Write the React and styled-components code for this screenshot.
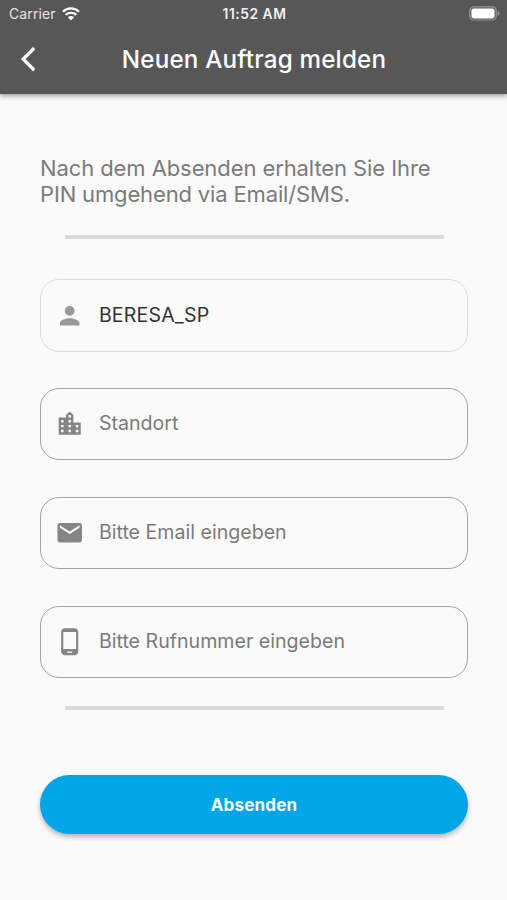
import React from 'react';
import styled, { createGlobalStyle } from 'styled-components';

const GlobalStyle = createGlobalStyle`
  * { box-sizing: border-box; }
  body { margin: 0; background: #fafafa; font-family: Inter, "Liberation Sans", sans-serif; }
`;

const Screen = styled.div`
  width: 507px;
  height: 900px;
  display: flex;
  flex-direction: column;
  background: #fafafa;
  overflow: hidden;
`;

const Header = styled.header`
  height: 94px;
  flex: none;
  background: #575757;
  color: #fff;
  box-shadow: 0 2px 5px rgba(0, 0, 0, 0.38);
`;

const StatusBar = styled.div`
  height: 27px;
  padding: 0 7px 0 9px;
  display: grid;
  grid-template-columns: 1fr auto 1fr;
  align-items: center;
`;

const Carrier = styled.div`
  display: flex;
  align-items: center;
  gap: 6px;
  font-size: 14px;
  line-height: 27px;
  letter-spacing: 0.1px;
  color: #e4e4e4;
`;

const Clock = styled.div`
  height: 27px;
  font-size: 13.8px;
  line-height: 29px;
  font-weight: 600;
  letter-spacing: 0.55px;
  color: #f0f0f0;
`;

const BatterySlot = styled.div`
  display: flex;
  justify-content: flex-end;
`;

const TitleBar = styled.div`
  height: 66px;
  display: grid;
  grid-template-columns: 60px 1fr 60px;
  align-items: center;
`;

const BackButton = styled.button`
  width: 60px;
  height: 60px;
  padding: 0 0 1px 20.5px;
  border: 0;
  background: none;
  color: #fff;
  display: flex;
  align-items: center;
`;

const Title = styled.h1`
  margin: 0;
  padding-left: 1px;
  text-align: center;
  white-space: nowrap;
  font-size: 24.2px;
  line-height: 30px;
  font-weight: 500;
  letter-spacing: 0.2px;
`;

const Form = styled.form`
  padding: 61px 39px 0 40px;
  display: flex;
  flex-direction: column;
`;

const Intro = styled.p`
  margin: 0;
  height: 52px;
  font-size: 22px;
  line-height: 26px;
  color: #7b7b7b;
  white-space: nowrap;
`;

const IntroLine = styled.span`
  display: block;
  letter-spacing: ${(p) => p.$spacing};
`;

const Divider = styled.hr`
  width: 379px;
  height: 4px;
  margin: ${(p) => p.$margin};
  border: 0;
  background: #dadada;
`;

const Fields = styled.div`
  display: grid;
  grid-auto-rows: 72px;
  row-gap: 37px;
`;

const Field = styled.label`
  display: flex;
  align-items: center;
  margin-bottom: ${(p) => (p.$filled ? '-1px' : '0')};
  padding-left: 14px;
  gap: 14.5px;
  border: ${(p) => (p.$filled ? '1px solid #dcdcdc' : '1px solid #a4a4a4')};
  border-radius: 19px;
  color: ${(p) => (p.$filled ? '#999' : '#858585')};
`;

const FieldText = styled.span`
  position: relative;
  top: -1px;
  white-space: nowrap;
  font-size: 19.6px;
  line-height: 26px;
  letter-spacing: ${(p) => p.$spacing};
  color: ${(p) => (p.$filled ? '#333' : '#7a7a7a')};
`;

const Submit = styled.button`
  height: 59px;
  padding: 1px 0 0;
  border: 0;
  border-radius: 30px;
  background: #02a5e5;
  color: #fff;
  font-family: inherit;
  font-size: 17px;
  font-weight: 700;
  letter-spacing: 0.2px;
  box-shadow: 0 3px 5px rgba(0, 0, 0, 0.28);
`;

const Icon = styled.svg`
  display: block;
  flex: none;
  fill: currentColor;
`;

const PATHS = {
  person: 'M12 12c2.21 0 4-1.79 4-4s-1.79-4-4-4-4 1.79-4 4 1.79 4 4 4zm0 2c-2.67 0-8 1.34-8 4v2h16v-2c0-2.66-5.33-4-8-4z',
  city: 'M15 11V5l-3-3-3 3v2H3v14h18V11h-6zm-8 8H5v-2h2v2zm0-4H5v-2h2v2zm0-4H5V9h2v2zm6 8h-2v-2h2v2zm0-4h-2v-2h2v2zm0-4h-2V9h2v2zm0-4h-2V5h2v2zm6 12h-2v-2h2v2zm0-4h-2v-2h2v2z',
  mail: 'M20 4H4c-1.1 0-1.99.9-1.99 2L2 18c0 1.1.9 2 2 2h16c1.1 0 2-.9 2-2V6c0-1.1-.9-2-2-2zm0 4l-8 5-8-5V6l8 5 8-5v2z',
  phone: 'M16 1H8C6.34 1 5 2.34 5 4v16c0 1.66 1.34 3 3 3h8c1.66 0 3-1.34 3-3V4c0-1.66-1.34-3-3-3zm-2 20h-4v-1h4v1zm3.25-3H6.75V4h10.5v14z',
};

const FIELDS = [
  { icon: 'person', text: 'BERESA_SP', filled: true, spacing: '0.15px' },
  { icon: 'city', text: 'Standort', spacing: '0px' },
  { icon: 'mail', text: 'Bitte Email eingeben', spacing: '0px' },
  { icon: 'phone', text: 'Bitte Rufnummer eingeben', spacing: '0px' },
];

function Wifi() {
  return (
    <Icon width="18" height="14" viewBox="0 0 18 14">
      <path d="M9 13.5 5.9 10.3a4.4 4.4 0 0 1 6.2 0z" fill="#fff" />
      <path d="M3.7 7.9a7.6 7.6 0 0 1 10.6 0M1 4.7a11.4 11.4 0 0 1 16 0" fill="none" stroke="#fff" strokeWidth="2.2" />
    </Icon>
  );
}

function Battery() {
  return (
    <Icon width="31" height="15" viewBox="0 0 31 15">
      <rect x="0.8" y="0.8" width="26.4" height="13.2" rx="4" fill="none" stroke="#969696" strokeWidth="1.2" />
      <rect x="2.4" y="2.4" width="23.2" height="10" rx="2.3" fill="#fff" />
      <path d="M28.6 5.2c1.2.4 1.9 1.2 1.9 2.2s-.7 1.8-1.9 2.2z" fill="#969696" />
    </Icon>
  );
}

export default function App() {
  return (
    <>
      <GlobalStyle />
      <Screen>
        <Header>
          <StatusBar>
            <Carrier>Carrier <Wifi /></Carrier>
            <Clock>11:52 AM</Clock>
            <BatterySlot><Battery /></BatterySlot>
          </StatusBar>
          <TitleBar>
            <BackButton aria-label="Zurück">
              <Icon width="14.3" height="24.2" viewBox="0 2.1 11.67 19.8">
                <path d="M11.67 3.87 9.9 2.1 0 12l9.9 9.9 1.77-1.77L3.54 12z" stroke="currentColor" strokeWidth="0.3" />
              </Icon>
            </BackButton>
            <Title>Neuen Auftrag melden</Title>
          </TitleBar>
        </Header>
        <Form>
          <Intro>
            <IntroLine $spacing="-0.09px">Nach dem Absenden erhalten Sie Ihre</IntroLine>
            <IntroLine $spacing="-0.15px">PIN umgehend via Email/SMS.</IntroLine>
          </Intro>
          <Divider $margin="28px 0 40px 24.5px" />
          <Fields>
            {FIELDS.map((f) => (
              <Field key={f.icon} $filled={f.filled}>
                <Icon width="29.4" height="29.4" viewBox="0 0 24 24"><path d={PATHS[f.icon]} /></Icon>
                <FieldText $filled={f.filled} $spacing={f.spacing}>{f.text}</FieldText>
              </Field>
            ))}
          </Fields>
          <Divider $margin="28px 0 65px 24.5px" />
          <Submit type="button">Absenden</Submit>
        </Form>
      </Screen>
    </>
  );
}
